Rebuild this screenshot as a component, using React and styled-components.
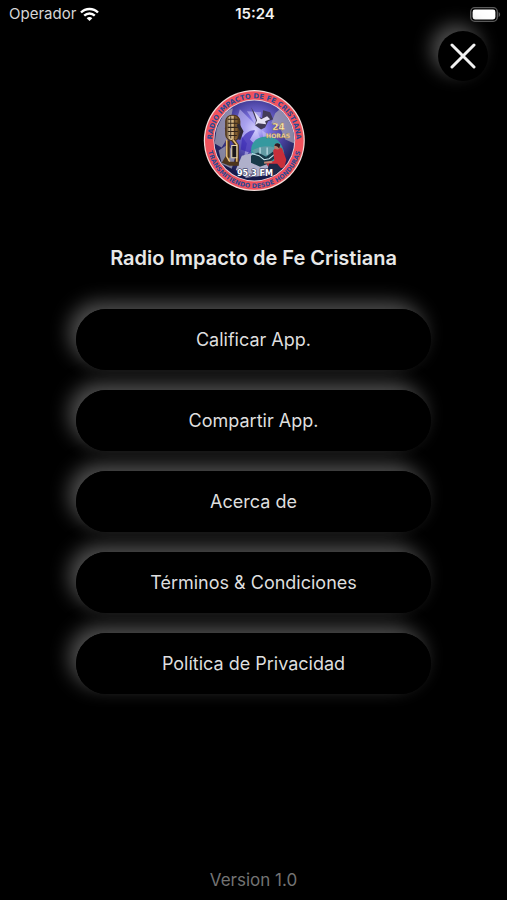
import React from "react";
import styled, { createGlobalStyle } from "styled-components";

const GlobalStyle = createGlobalStyle`
  *, *::before, *::after { box-sizing: border-box; }
  body {
    margin: 0;
    background: #000;
    color: #e4e4e4;
    font-family: Inter, "Liberation Sans", sans-serif;
  }
`;

const Screen = styled.div`
  display: flex;
  flex-direction: column;
  min-height: 100vh;
  background: #000;
`;

const StatusBar = styled.header`
  display: grid;
  grid-template-columns: 1fr auto 1fr;
  align-items: center;
  height: 28px;
  padding: 0 6px 0 9px;
  font-size: 15px;
  line-height: 20px;
`;

const Carrier = styled.div`
  display: flex;
  align-items: center;
  gap: 4px;
  color: #d6d6d6;
`;

const Clock = styled.time`
  font-weight: 600;
  color: #f2f2f2;
`;

const Battery = styled.div`
  display: flex;
  justify-content: flex-end;
`;

const Toolbar = styled.div`
  display: flex;
  justify-content: flex-end;
  padding: 3px 19px 0;
`;

const RaisedButton = styled.button`
  border: 0;
  background: #000;
  font-family: inherit;
  cursor: pointer;
`;

const CloseButton = styled(RaisedButton)`
  display: grid;
  place-items: center;
  width: 50px;
  height: 50px;
  padding: 0;
  border-radius: 50%;
  box-shadow: -7px -7px 18px #4c4c4c;
`;

const Main = styled.main`
  display: flex;
  flex-direction: column;
  align-items: center;
  padding-top: 8px;
`;

const Title = styled.h1`
  margin: 53px 0 37px;
  font-size: 20px;
  font-weight: 600;
  line-height: 28px;
  color: #e8e8e8;
`;

const Menu = styled.nav`
  display: flex;
  flex-direction: column;
  gap: 20px;
  width: 70%;
  isolation: isolate;
`;

const MenuButton = styled(RaisedButton)`
  position: relative;
  height: 61px;
  border-radius: 31px;
  color: #dedede;
  font-size: 18px;
  line-height: 24px;

  &::before {
    content: "";
    position: absolute;
    inset: 0;
    z-index: -1;
    border-radius: inherit;
    box-shadow: -7px -7px 19px #505050;
  }
`;

const Footer = styled.footer`
  margin-top: auto;
  padding: 20px 0 8px;
  text-align: center;
  font-size: 17px;
  line-height: 24px;
  color: #737373;
`;

const items = [
  "Calificar App.",
  "Compartir App.",
  "Acerca de",
  "Términos & Condiciones",
  "Política de Privacidad",
];

function WifiIcon() {
  return (
    <svg width="19" height="15" viewBox="0 0 19 15" fill="none" stroke="#fff" strokeWidth="2.4" aria-hidden="true">
      <path d="M1 5.500C5.600.9 13.400.9 18 5.500" />
      <path d="M4.200 8.700c3-2.900 7.600-2.900 10.600 0" />
      <path d="M9.500 14 6.700 11.200c1.500-1.500 4.100-1.500 5.600 0z" fill="#fff" stroke="none" />
    </svg>
  );
}

function BatteryIcon() {
  return (
    <svg width="31" height="15" viewBox="0 0 31 15" aria-hidden="true">
      <rect x="0.7" y="0.7" width="26.6" height="13.6" rx="4" fill="#000" stroke="#5c5c5c" strokeWidth="1.3" />
      <rect x="2.6" y="2.6" width="22.8" height="9.8" rx="2.3" fill="#fff" />
      <path d="M28.600 5c2 .8 2 4.200 0 5z" fill="#5c5c5c" />
    </svg>
  );
}

function CloseIcon() {
  return (
    <svg width="26" height="26" viewBox="0 0 26 26" stroke="#f1f1f1" strokeWidth="3" strokeLinecap="round" aria-hidden="true">
      <path d="M2 2 24 24M24 2 2 24" />
    </svg>
  );
}

function StationLogo() {
  return (
    <svg width="102" height="102" viewBox="8.5 9 101 101" role="img" aria-label="Radio Impacto de Fe Cristiana 95.3 FM" fontFamily="'DejaVu Sans', sans-serif" fontWeight="700">
      <defs>
        <radialGradient id="sky" cx="52%" cy="36%" r="60%">
          <stop offset="0" stopColor="#d4d0ff" />
          <stop offset="0.25" stopColor="#7d73e2" />
          <stop offset="0.6" stopColor="#48419d" />
          <stop offset="1" stopColor="#171a4a" />
        </radialGradient>
        <linearGradient id="brass" x1="0" x2="1">
          <stop offset="0" stopColor="#4a3017" />
          <stop offset="0.35" stopColor="#f2dcae" />
          <stop offset="0.65" stopColor="#a67a40" />
          <stop offset="1" stopColor="#38230f" />
        </linearGradient>
        <clipPath id="disc"><circle cx="59.3" cy="60" r="39.5" /></clipPath>
        <path id="arcTop" d="M18.200 67A41.700 41.700 0 1 1 100.400 67" />
        <path id="arcBottom" d="M12.300 60A47 47 0 0 0 106.300 60" />
      </defs>
      <circle cx="59.3" cy="60" r="50" fill="#f3dcda" />
      <circle cx="59.3" cy="60" r="48.8" fill="#f0525c" />
      <circle cx="59.3" cy="60" r="40.5" fill="#e3d0dc" />
      <circle cx="59.3" cy="60" r="39.6" fill="url(#sky)" />
      <g clipPath="url(#disc)">
        <path d="M22 48l8-16 8-4-2 12-6 8 3 9-6 10-7-4zM80 33l9-8 10 20v18l-9-4-6-13-8-3zM24 70l9-6 8 10-4 14-10-5z" fill="#a9a7b7" opacity=".72" />
        <path d="M45 29l14 14 8 19-12 8-7 11 4-18-12-17zM67 50l11 7-8 14zM52 31l11 17 3-16z" fill="#d4cdfc" opacity=".5" />
        <path d="M47 58c4-6 9-9 13-8l-5 9 7 7-8 6-8-3z" fill="#3928b2" opacity=".7" />
        <path d="M47 75l12-3 12 6 4 16-24 3-10-8z" fill="#afb0cb" />
        <path d="M56 71q0-14 15-15 15 0 18 17l-7 9H60z" fill="#35999f" />
        <path d="M57 70q14-9 31 1l-5 4H61z" fill="#629aa4" />
        <path d="M56 75l7-3 8 4 7-5 2 6-7 6-8 3-9-4z" fill="#173848" />
        <path d="M57 73l7 2 5 4 5-1 5-4M65 67v6M72 67v7" fill="none" stroke="#c6e3ed" strokeWidth="1.1" />
        <path d="M78 70l4-5 5 3 4 11-2 8-14 1-4-5 8-3z" fill="#c82f3a" />
        <path d="M69 82l8-1" stroke="#c58875" strokeWidth="2" />
        <circle cx="82" cy="66" r="3" fill="#b77c67" />
        <path d="M79 65q2-4 6-1l-1 4-2-2z" fill="#281925" />
        <path d="M74 83h8l5 6-3 5H71z" fill="#1d2948" />
      </g>
      <path d="M56 27l6 9 5 2 1-8 7 2 3 7-5 2-3 6-4 2-6-4 1-5z" fill="#423b58" />
      <path d="M59 31l7 8 6-3 3 3-5 2 1 3-8-1-3 2 2-5z" fill="#e5e1f4" />
      <rect x="31" y="35" width="14" height="25" rx="6" fill="url(#brass)" stroke="#503617" />
      <path d="M33 39h10M33 43h10M33 47h10M33 51h10M34 55h8M36 36v22M40 36v22" stroke="#332419" strokeWidth="1" />
      <path d="M33 60v16l-3 5 5 2h7V65l-4-6" fill="none" stroke="#4d351d" strokeWidth="4" />
      <path d="M32 59v17l3 5M38 59l4 5v17" fill="none" stroke="#e4bb72" strokeWidth="1.5" />
      <path d="M37 65h5v12h-5z" fill="#191519" stroke="#e8d6ad" />
      <path d="M43 44l4 7-3 8" fill="none" stroke="#302936" strokeWidth="3" />
      <g fill="#fff0b4" stroke="#a66f2e" strokeWidth=".3">
        <text x="77" y="50" fontSize="9">24</text>
        <text x="71" y="58" fontSize="6">HORAS</text>
      </g>
      <g fill="#294a96" textAnchor="middle">
        <text fontSize="6.8"><textPath href="#arcTop" startOffset="50%">RADIO IMPACTO DE FE CRISTIANA</textPath></text>
        <text fontSize="6.2"><textPath href="#arcBottom" startOffset="50%">TRANSMITIENDO DESDE HONDURAS</textPath></text>
      </g>
      <text x="60" y="95" textAnchor="middle" fontSize="8" fill="#fff" stroke="#24254c" strokeWidth="1" paintOrder="stroke">95.3 FM</text>
    </svg>
  );
}

export default function App() {
  return (
    <>
      <GlobalStyle />
      <Screen>
        <StatusBar>
          <Carrier>Operador <WifiIcon /></Carrier>
          <Clock>15:24</Clock>
          <Battery><BatteryIcon /></Battery>
        </StatusBar>
        <Toolbar>
          <CloseButton aria-label="Cerrar"><CloseIcon /></CloseButton>
        </Toolbar>
        <Main>
          <StationLogo />
          <Title>Radio Impacto de Fe Cristiana</Title>
          <Menu>
            {items.map((label) => (
              <MenuButton key={label}>{label}</MenuButton>
            ))}
          </Menu>
        </Main>
        <Footer>Version 1.0</Footer>
      </Screen>
    </>
  );
}
